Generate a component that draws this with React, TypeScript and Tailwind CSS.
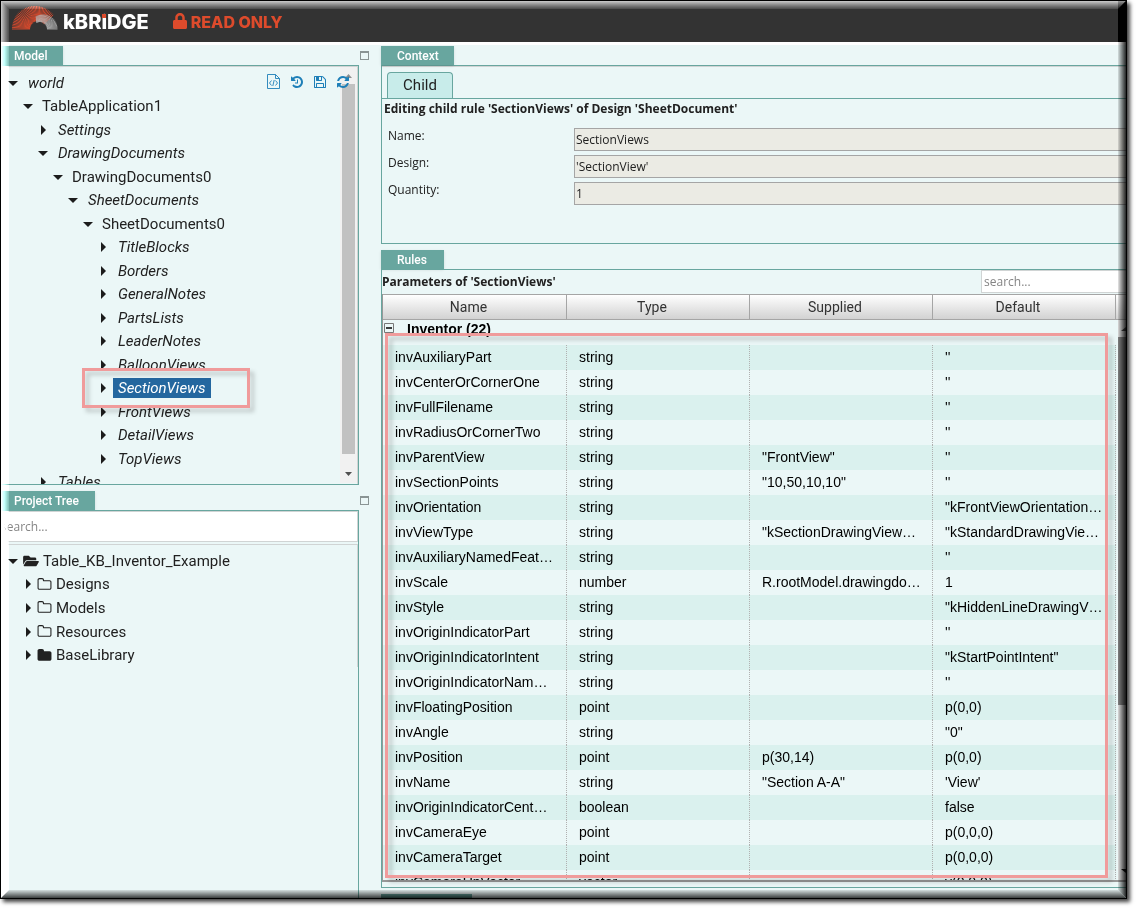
import type { ReactNode } from 'react';
import { FaFolderOpen, FaLock } from 'react-icons/fa';

type TreeItem = {
  label: string;
  depth: number;
  open?: boolean;
  italic?: boolean;
  selected?: boolean;
  icon?: 'open' | 'outline' | 'solid';
};

const modelTree: TreeItem[] = [
  { label: 'world', depth: 0, open: true, italic: true },
  { label: 'TableApplication1', depth: 1, open: true },
  { label: 'Settings', depth: 2, italic: true },
  { label: 'DrawingDocuments', depth: 2, open: true, italic: true },
  { label: 'DrawingDocuments0', depth: 3, open: true },
  { label: 'SheetDocuments', depth: 4, open: true, italic: true },
  { label: 'SheetDocuments0', depth: 5, open: true },
  { label: 'TitleBlocks', depth: 6, italic: true },
  { label: 'Borders', depth: 6, italic: true },
  { label: 'GeneralNotes', depth: 6, italic: true },
  { label: 'PartsLists', depth: 6, italic: true },
  { label: 'LeaderNotes', depth: 6, italic: true },
  { label: 'BalloonViews', depth: 6, italic: true },
  { label: 'SectionViews', depth: 6, italic: true, selected: true },
  { label: 'FrontViews', depth: 6, italic: true },
  { label: 'DetailViews', depth: 6, italic: true },
  { label: 'TopViews', depth: 6, italic: true },
  { label: 'Tables', depth: 2, italic: true },
];

const projectTree: TreeItem[] = [
  { label: 'Table_KB_Inventor_Example', depth: 0, open: true, icon: 'open' },
  { label: 'Designs', depth: 1, icon: 'outline' },
  { label: 'Models', depth: 1, icon: 'outline' },
  { label: 'Resources', depth: 1, icon: 'outline' },
  { label: 'BaseLibrary', depth: 1, icon: 'solid' },
];

// name, type, supplied, default
const parameters: string[][] = [
  ['invAuxiliaryPart', 'string', '', "''"],
  ['invCenterOrCornerOne', 'string', '', "''"],
  ['invFullFilename', 'string', '', "''"],
  ['invRadiusOrCornerTwo', 'string', '', "''"],
  ['invParentView', 'string', '"FrontView"', "''"],
  ['invSectionPoints', 'string', '"10,50,10,10"', "''"],
  ['invOrientation', 'string', '', '"kFrontViewOrientation…'],
  ['invViewType', 'string', '"kSectionDrawingView…', '"kStandardDrawingVie…'],
  ['invAuxiliaryNamedFeat…', 'string', '', "''"],
  ['invScale', 'number', 'R.rootModel.drawingdo…', '1'],
  ['invStyle', 'string', '', '"kHiddenLineDrawingV…'],
  ['invOriginIndicatorPart', 'string', '', "''"],
  ['invOriginIndicatorIntent', 'string', '', '"kStartPointIntent"'],
  ['invOriginIndicatorNam…', 'string', '', "''"],
  ['invFloatingPosition', 'point', '', 'p(0,0)'],
  ['invAngle', 'string', '', '"0"'],
  ['invPosition', 'point', 'p(30,14)', 'p(0,0)'],
  ['invName', 'string', '"Section A-A"', "'View'"],
  ['invOriginIndicatorCent…', 'boolean', '', 'false'],
  ['invCameraEye', 'point', '', 'p(0,0,0)'],
  ['invCameraTarget', 'point', '', 'p(0,0,0)'],
  ['invCameraUpVector', 'vector', '', 'v(0,0,0)'],
];

const fields = [
  { id: 'name', label: 'Name:', value: 'SectionViews' },
  { id: 'design', label: 'Design:', value: "'SectionView'" },
  { id: 'quantity', label: 'Quantity:', value: '1' },
];

const indents = ['pl-0', 'pl-[15px]', 'pl-[30px]', 'pl-[45px]', 'pl-[60px]', 'pl-[75px]', 'pl-[90px]'];

const HISTORY =
  'M1664 896q0 156-61 298t-164 245-245 164-298 61q-172 0-327-72.5t-264-204.5q-7-10-6.5-22.5t8.5-20.5l137-138q10-9 25-9 16 2 23 12 73 95 179 147t225 52q104 0 198.5-40.5t163.5-109.5 109.5-163.5 40.5-198.5-40.5-198.5-109.5-163.5-163.5-109.5-198.5-40.5q-98 0-188 35.5t-160 101.5l137 138q31 30 14 69-17 40-59 40h-448q-26 0-45-19t-19-45v-448q0-42 40-59 39-17 69 14l130 129q107-101 244.5-156.5t284.5-55.5q156 0 298 61t245 164 164 245 61 298zm-640-288v448q0 14-9 23t-23 9h-320q-14 0-23-9t-9-23v-64q0-14 9-23t23-9h224v-352q0-14 9-23t23-9h64q14 0 23 9t9 23z';
const FLOPPY =
  'M512 1536h768v-384h-768v384zm896 0h128v-896q0-14-10-38.5t-20-34.5l-281-281q-10-10-34-20t-39-10v416q0 40-28 68t-68 28h-576q-40 0-68-28t-28-68v-416h-128v1280h128v-416q0-40 28-68t68-28h832q40 0 68 28t28 68v416zm-384-928v-320q0-13-9.5-22.5t-22.5-9.5h-192q-13 0-22.5 9.5t-9.5 22.5v320q0 13 9.5 22.5t22.5 9.5h192q13 0 22.5-9.5t9.5-22.5zm640 32v928q0 40-28 68t-68 28h-1344q-40 0-68-28t-28-68v-1344q0-40 28-68t68-28h928q40 0 88 20t76 48l280 280q28 28 48 76t20 88z';
const REFRESH =
  'M1639 1056q0 5-1 7-64 268-268 434.5t-478 166.5q-146 0-282.5-55t-243.5-157l-129 129q-19 19-45 19t-45-19-19-45v-448q0-26 19-45t45-19h448q26 0 45 19t19 45-19 45l-137 137q71 66 161 102t187 36q134 0 250-65t186-179q11-17 53-117 8-23 30-23h192q13 0 22.5 9.5t9.5 22.5zm25-800v448q0 26-19 45t-45 19h-448q-26 0-45-19t-19-45 19-45l138-138q-148-137-349-137-134 0-250 65t-186 179q-11 17-53 117-8 23-30 23h-199q-13 0-22.5-9.5t-9.5-22.5v-7q65-268 270-434.5t480-166.5q146 0 284 55.5t245 156.5l130-129q19-19 45-19t45 19 19 45z';
const FOLDER =
  'M1728 608v704q0 92-66 158t-158 66h-1216q-92 0-158-66t-66-158v-960q0-92 66-158t158-66h320q92 0 158 66t66 158v32h672q92 0 158 66t66 158z';
const FOLDER_HOLE =
  'M1600 1312v-704q0-40-28-68t-68-28h-704q-40 0-68-28t-28-68v-64q0-40-28-68t-68-28h-320q-40 0-68 28t-28 68v960q0 40 28 68t68 28h1216q40 0 68-28t28-68z';

function Glyph({ d, className }: { d: string; className: string }) {
  return (
    <svg viewBox="0 0 1792 1792" className={className} fill="currentColor" fillRule="evenodd" aria-hidden="true">
      <path d={d} />
    </svg>
  );
}

function FileCode() {
  return (
    <svg viewBox="0 0 14 16" className="h-4 w-[14px]" fill="none" stroke="currentColor" aria-hidden="true">
      <path d="M.5 .5V14.5H12.500V4.500L8.500 .5zM8.500 .5V4.500H12.500" strokeWidth=".9" />
      <path d="M4.500 6.500L2.500 9L4.500 11.500M8.500 6.500L10.500 9L8.500 11.500M7.200 6L5.800 12" strokeWidth=".9" />
    </svg>
  );
}

function Logo() {
  const rays = (count: number, from: number, to: number, cx: number, outer: number, icx: number, inner: number) =>
    Array.from({ length: count }, (_, i) => {
      const a = ((from + ((to - from) * i) / (count - 1)) * Math.PI) / 180;
      return `M${cx + outer * Math.cos(a)} ${24 - outer * Math.sin(a)}L${icx + inner * Math.cos(a)} ${24 - inner * Math.sin(a)}`;
    }).join('');
  return (
    <svg viewBox="0 0 48 25" className="h-[25px] w-12" fill="none" aria-hidden="true">
      <path d={rays(36, 180, 38, 24, 23, 27, 8)} stroke="#dd4b2c" strokeWidth=".9" />
      <path d={rays(26, 118, 0, 32, 14.500, 29, 7)} stroke="#b4b4b4" strokeWidth=".8" />
    </svg>
  );
}

function Caret({ open }: { open?: boolean }) {
  return (
    <svg viewBox="0 0 10 10" className="size-[10px] shrink-0" fill="#1c1c1c" aria-hidden="true">
      {open ? <path d="M0 3H10L5 8z" /> : <path d="M3 0V10L8 5z" />}
    </svg>
  );
}

function Tree({ items, label, className }: { items: TreeItem[]; label: string; className: string }) {
  return (
    <ul aria-label={label} className={`flex flex-col pl-[7px] text-[#212121] ${className}`}>
      {items.map((item) => (
        <li key={item.label} className={`flex min-h-0 flex-1 ${indents[item.depth]}`}>
          <button className={`flex items-center font-[Roboto] text-[15px] leading-5 ${item.italic ? 'italic' : ''}`}>
            <Caret open={item.open} />
            {item.icon === 'open' && <FaFolderOpen className="ml-[5px] h-[14px] w-4" />}
            {item.icon === 'outline' && <Glyph d={FOLDER + FOLDER_HOLE} className="ml-1 size-[15px]" />}
            {item.icon === 'solid' && <Glyph d={FOLDER} className="ml-1 size-[15px]" />}
            <span
              className={
                item.selected
                  ? 'ml-[5px] bg-[#24679f] px-[5px] text-white'
                  : item.icon
                    ? 'ml-1'
                    : item.italic
                      ? 'ml-[10px]'
                      : 'ml-[9px]'
              }
            >
              {item.label}
            </span>
          </button>
        </li>
      ))}
    </ul>
  );
}

function PaneTab({ children, className }: { children: ReactNode; className: string }) {
  return (
    <div className="flex h-[19px] items-center justify-between">
      <h2
        className={`flex h-[19px] items-center bg-[#68a69f] font-[Roboto] text-[12px] font-medium text-white shadow-sm ${className}`}
      >
        {children}
      </h2>
      <button aria-label="Maximize" className="mr-[-10px] h-[9px] w-[9px] border border-t-2 border-[#8a9494]" />
    </div>
  );
}

function Header() {
  return (
    <header className="flex h-[41px] shrink-0 items-start border-r-8 border-black bg-[#333] pt-1 pl-[10px] font-[Inter] leading-6">
      <Logo />
      <span className="relative ml-1 pt-[5px] text-[20px] font-extrabold text-white">
        kBR
        <span className="relative">
          i<span className="absolute top-1 left-px size-1 bg-[#dd4b2c]" />
        </span>
        DGE
      </span>
      <FaLock className="mt-2 ml-6 h-4 w-[14px] text-[#dd4b2c]" />
      <span className="ml-1 pt-[5px] text-[16px] font-extrabold text-[#dd4b2c]">READ ONLY</span>
    </header>
  );
}

function ModelPane() {
  return (
    <section>
      <PaneTab className="w-[62px] pl-[13px]">Model</PaneTab>
      <div className="relative flex h-[420px] overflow-hidden border-y border-r border-[#68a69f] pt-[5px] shadow-[inset_-1px_1px_0_#d0d4d4]">
        <Tree items={modelTree} label="Model" className="h-[423px] shrink-0" />
        <div className="absolute top-px right-px bottom-px flex w-[17px] flex-col items-center bg-[#f1f1f1]">
          <svg viewBox="0 0 17 17" className="size-[17px] shrink-0" fill="#8f8f8f">
            <path d="M5 11H12L8.500 7z" />
          </svg>
          <div className="h-[370px] w-[13px] bg-[#c1c1c1]" />
          <svg viewBox="0 0 17 17" className="mt-auto size-[17px] shrink-0" fill="#505050">
            <path d="M5 6H12L8.500 10z" />
          </svg>
        </div>
        <div className="absolute top-2 right-2 flex items-center gap-[9px] text-[#1e7fb8]">
          <button aria-label="Edit source">
            <FileCode />
          </button>
          <button aria-label="History">
            <Glyph d={HISTORY} className="size-[14px]" />
          </button>
          <button aria-label="Save">
            <Glyph d={FLOPPY} className="size-[14px]" />
          </button>
          <button aria-label="Refresh">
            <Glyph d={REFRESH} className="size-[14px]" />
          </button>
        </div>
        <div className="absolute top-[302px] left-[81px] h-10 w-[168px] border-3 border-[#f09b9b] drop-shadow-[4px_4px_2px_rgba(0,0,0,0.2)]" />
      </div>
    </section>
  );
}

function ProjectPane() {
  return (
    <section className="flex min-h-0 flex-1 flex-col">
      <PaneTab className="w-[94px] pl-[13px]">Project Tree</PaneTab>
      <div className="flex-1 border-t border-r border-[#68a69f]">
        <div className="border border-l-0 border-[#d0d4d4]">
          <input
            aria-label="Search project"
            placeholder="search..."
            className="block h-[29px] w-full bg-white px-0 font-['Open_Sans'] text-[12px] placeholder:text-[#858585]"
          />
        </div>
        <div className="mt-[2px] border-t border-r border-[#d0d4d4] pt-1">
          <Tree items={projectTree} label="Project" className="h-[118px]" />
        </div>
      </div>
    </section>
  );
}

function ContextPane() {
  return (
    <section>
      <PaneTab className="w-[73px] pl-4">Context</PaneTab>
      <div className="h-[179px] border-y border-l border-[#68a69f] font-['Open_Sans'] text-[12px] text-[#212121] shadow-[inset_0_1px_0_#d0d4d4]">
        <div className="flex border-b border-[#68a69f] pt-[6px] pl-[5px]">
          <button className="h-[26px] w-[66px] rounded-t-sm border border-b-0 border-[#68a69f] bg-[#c8ecea] font-[Roboto] text-[15px]">
            Child
          </button>
        </div>
        <h3 className="pl-[2px] leading-5 font-bold">Editing child rule 'SectionViews' of Design 'SheetDocument'</h3>
        <div className="flex flex-col gap-1 pt-[9px] pl-[6px]">
          {fields.map((field) => (
            <div key={field.id} className="flex">
              <label htmlFor={field.id} className="w-[186px] shrink-0 leading-4">
                {field.label}
              </label>
              <input
                id={field.id}
                readOnly
                defaultValue={field.value}
                className="h-[23px] min-w-0 flex-1 border border-r-0 border-[#a5a5a5] bg-[#ebebe4] px-px"
              />
            </div>
          ))}
        </div>
      </div>
    </section>
  );
}

function RulesPane() {
  return (
    <section className="flex min-h-0 flex-1 flex-col">
      <PaneTab className="w-[63px] pl-4">Rules</PaneTab>
      <div className="relative flex min-h-0 flex-1 flex-col border-y border-l border-[#68a69f] pb-[5px]">
        <div className="flex h-6 shrink-0 items-center justify-between font-['Open_Sans'] text-[12px] text-[#212121]">
          <h3 className="font-bold">Parameters of 'SectionViews'</h3>
          <input
            aria-label="Search parameters"
            placeholder="search..."
            className="mb-px h-[23px] w-[145px] border border-r-0 border-[#d0d4d4] bg-white px-[2px] placeholder:text-[#858585]"
          />
        </div>
        <div className="flex min-h-0 flex-1 overflow-hidden border-b-2 border-l border-[#989898]">
          <div className="min-w-0 flex-1">
            <table className="w-full table-fixed border-separate border-spacing-0 text-left font-['Liberation_Sans'] text-[14px] text-black">
              <thead>
                <tr className="h-[26px] text-center font-[Roboto] text-[#333]">
                  {['Name', 'Type', 'Supplied', 'Default'].map((name) => (
                    <th
                      key={name}
                      className="border-y border-r border-[#a5a5a5] bg-linear-to-b from-white to-[#d2d2d2] p-0 pr-3 font-normal first:w-[184px]"
                    >
                      {name}
                    </th>
                  ))}
                </tr>
              </thead>
              <tbody>
                <tr className="h-[25px]">
                  <th colSpan={4} className="p-0 align-top">
                    <button className="flex items-start pt-px font-bold">
                      <svg viewBox="0 0 10 10" className="mt-[2px] ml-px size-[10px]" fill="none" aria-hidden="true">
                        <path d="M.5 .5H9.500V9.500H.5z" stroke="#777" />
                        <path d="M2 5H8" stroke="#000" strokeWidth="1.500" />
                      </svg>
                      <span className="ml-[13px] leading-4">Inventor (22)</span>
                    </button>
                  </th>
                </tr>
                {parameters.map((row) => (
                  <tr key={row[0]} className="h-[25px] odd:bg-[#ebf7f7] even:bg-[#daf1ee]">
                    {row.map((cell, i) => (
                      <td
                        key={i}
                        className="overflow-hidden border-r border-dotted border-[#b0b0b0] p-0 pl-3 whitespace-nowrap"
                      >
                        {cell}
                      </td>
                    ))}
                  </tr>
                ))}
              </tbody>
            </table>
          </div>
          <div className="flex w-[10px] flex-col">
            <div className="h-[26px] border-y border-[#a5a5a5] bg-linear-to-b from-white to-[#d2d2d2]" />
            <div className="ml-[2px] flex flex-1 flex-col overflow-hidden bg-[#f1f1f1]">
              <svg viewBox="0 0 8 17" className="h-[17px] w-2 shrink-0" fill="#505050">
                <path d="M3 11H8V7z" />
              </svg>
              <div className="h-[368px] bg-[#8c8c8c]" />
              <svg viewBox="0 0 8 17" className="mt-auto h-[17px] w-2 shrink-0" fill="#111">
                <path d="M3 6H8V10z" />
              </svg>
            </div>
          </div>
        </div>
        <div className="absolute top-[63px] right-[18px] bottom-[9px] left-[3px] border-3 border-[#f09b9b] drop-shadow-[4px_4px_2px_rgba(0,0,0,0.2)]" />
      </div>
    </section>
  );
}

export default function App() {
  return (
    <div className="h-screen bg-white pr-[10px] pb-[10px]">
      <div className="relative h-full border border-black shadow-[3px_3px_4px_rgba(0,0,0,0.75)]">
        <div className="flex h-full flex-col overflow-hidden bg-[#ebf7f7]">
          <Header />
          <main className="flex min-h-0 flex-1 border-t-3 border-white pt-px">
            <div className="flex w-[358px] shrink-0 flex-col gap-[6px]">
              <ModelPane />
              <ProjectPane />
            </div>
            <div className="ml-[22px] flex min-w-0 flex-1 flex-col gap-[6px]">
              <ContextPane />
              <RulesPane />
              <div className="h-1 w-[91px] bg-[#68a69f]" />
            </div>
          </main>
        </div>
        {/* bevelled frame */}
        <div className="pointer-events-none absolute inset-y-0 left-0 w-2 bg-linear-to-r from-[#999] to-[#181818] mix-blend-plus-lighter [clip-path:polygon(0_0,100%_8px,100%_calc(100%-8px),0_100%)]" />
        <div className="pointer-events-none absolute inset-x-0 top-0 h-2 bg-linear-to-b from-[#999] to-[#181818] mix-blend-plus-lighter [clip-path:polygon(0_0,100%_0,calc(100%-8px)_100%,8px_100%)]" />
        <div className="pointer-events-none absolute inset-y-0 right-0 w-2 bg-linear-to-r from-black/10 to-black/85 [clip-path:polygon(0_8px,100%_0,100%_100%,0_calc(100%-8px))]" />
        <div className="pointer-events-none absolute inset-x-0 bottom-0 h-2 bg-linear-to-b from-black/10 to-black/75 [clip-path:polygon(8px_0,calc(100%-8px)_0,100%_100%,0_100%)]" />
      </div>
    </div>
  );
}
